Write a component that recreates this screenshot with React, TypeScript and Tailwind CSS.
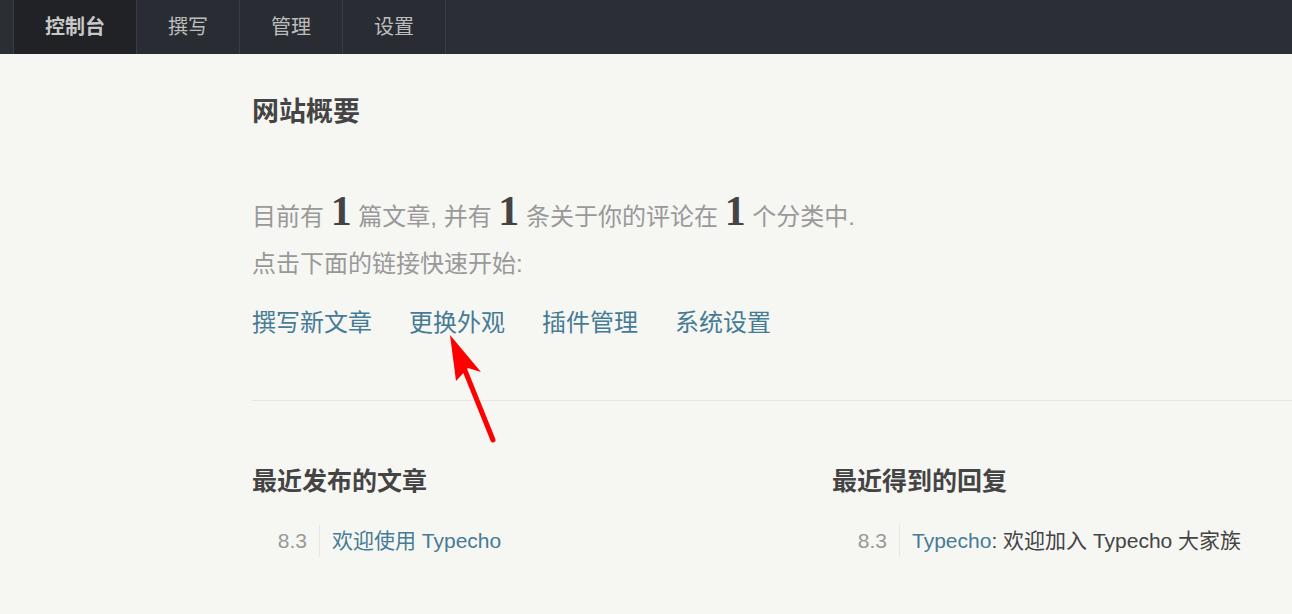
const navItems = ['控制台', '撰写', '管理', '设置'];

const quickLinks = ['撰写新文章', '更换外观', '插件管理', '系统设置'];

function Arrow() {
  return (
    <svg className="absolute left-0 top-0 pointer-events-none" width="1292" height="614" viewBox="0 0 1292 614">
      <line x1="493" y1="440" x2="464" y2="368" stroke="#ff0000" strokeWidth="5" strokeLinecap="round" />
      <polygon points="450,335 481,372 468,368 456,381" fill="#ff0000" />
    </svg>
  );
}

function Num() {
  return (
    <em className="not-italic font-bold text-[#444] text-[42px]" style={{ fontFamily: '"Liberation Serif", serif' }}>
      1
    </em>
  );
}

export default function App() {
  return (
    <div
      className="relative w-[1292px] h-[614px] overflow-hidden bg-[#f6f6f3]"
      style={{ fontFamily: '"Liberation Sans", "Noto Sans CJK SC", sans-serif' }}
    >
      <nav className="h-[54px] bg-[#2b2f35] flex pl-[13px]">
        {navItems.map((item, i) => (
          <a
            key={item}
            className={`flex items-center px-[31px] text-[20px] border-l border-[#383c43] ${
              i === 0 ? 'bg-[#202226] font-bold text-[#c8c8c8]' : 'bg-[#292d33] text-[#bdbdbd]'
            } ${i === navItems.length - 1 ? 'border-r' : ''}`}
          >
            {item}
          </a>
        ))}
      </nav>

      <main className="pl-[252px] pt-[40px] w-[1500px]">
        <h2 className="text-[27px] leading-[36px] font-bold text-[#444]">网站概要</h2>

        <div className="mt-[57px] text-[24px] text-[#999]">
          <p className="leading-[48px]">
            目前有 <Num /> 篇文章, 并有 <Num /> 条关于你的评论在 <Num /> 个分类中.
          </p>
          <p className="mt-[5px] leading-[36px]">点击下面的链接快速开始:</p>
          <div className="mt-[23px] flex gap-[37px] leading-[36px] text-[#467b96]">
            {quickLinks.map((l) => (
              <a key={l}>{l}</a>
            ))}
          </div>
        </div>

        <div className="mt-[59px] border-t border-[#e6e6e2]" />

        <div className="flex mt-[63px]">
          <section className="w-[580px]">
            <h3 className="text-[25px] leading-[34px] font-bold text-[#444]">最近发布的文章</h3>
            <ul className="mt-[27px] text-[21px] leading-[32px]">
              <li className="flex">
                <span className="w-[68px] text-right pr-[12px] border-r border-[#e6e6e2] text-[#999]">8.3</span>
                <a className="pl-[12px] text-[#467b96]">欢迎使用 Typecho</a>
              </li>
            </ul>
          </section>
          <section className="w-[580px]">
            <h3 className="text-[25px] leading-[34px] font-bold text-[#444]">最近得到的回复</h3>
            <ul className="mt-[27px] text-[21px] leading-[32px]">
              <li className="flex">
                <span className="w-[68px] text-right pr-[12px] border-r border-[#e6e6e2] text-[#999]">8.3</span>
                <span className="pl-[12px] text-[#444]">
                  <a className="text-[#467b96]">Typecho</a>: 欢迎加入 Typecho 大家族
                </span>
              </li>
            </ul>
          </section>
        </div>
      </main>

      <Arrow />
    </div>
  );
}
